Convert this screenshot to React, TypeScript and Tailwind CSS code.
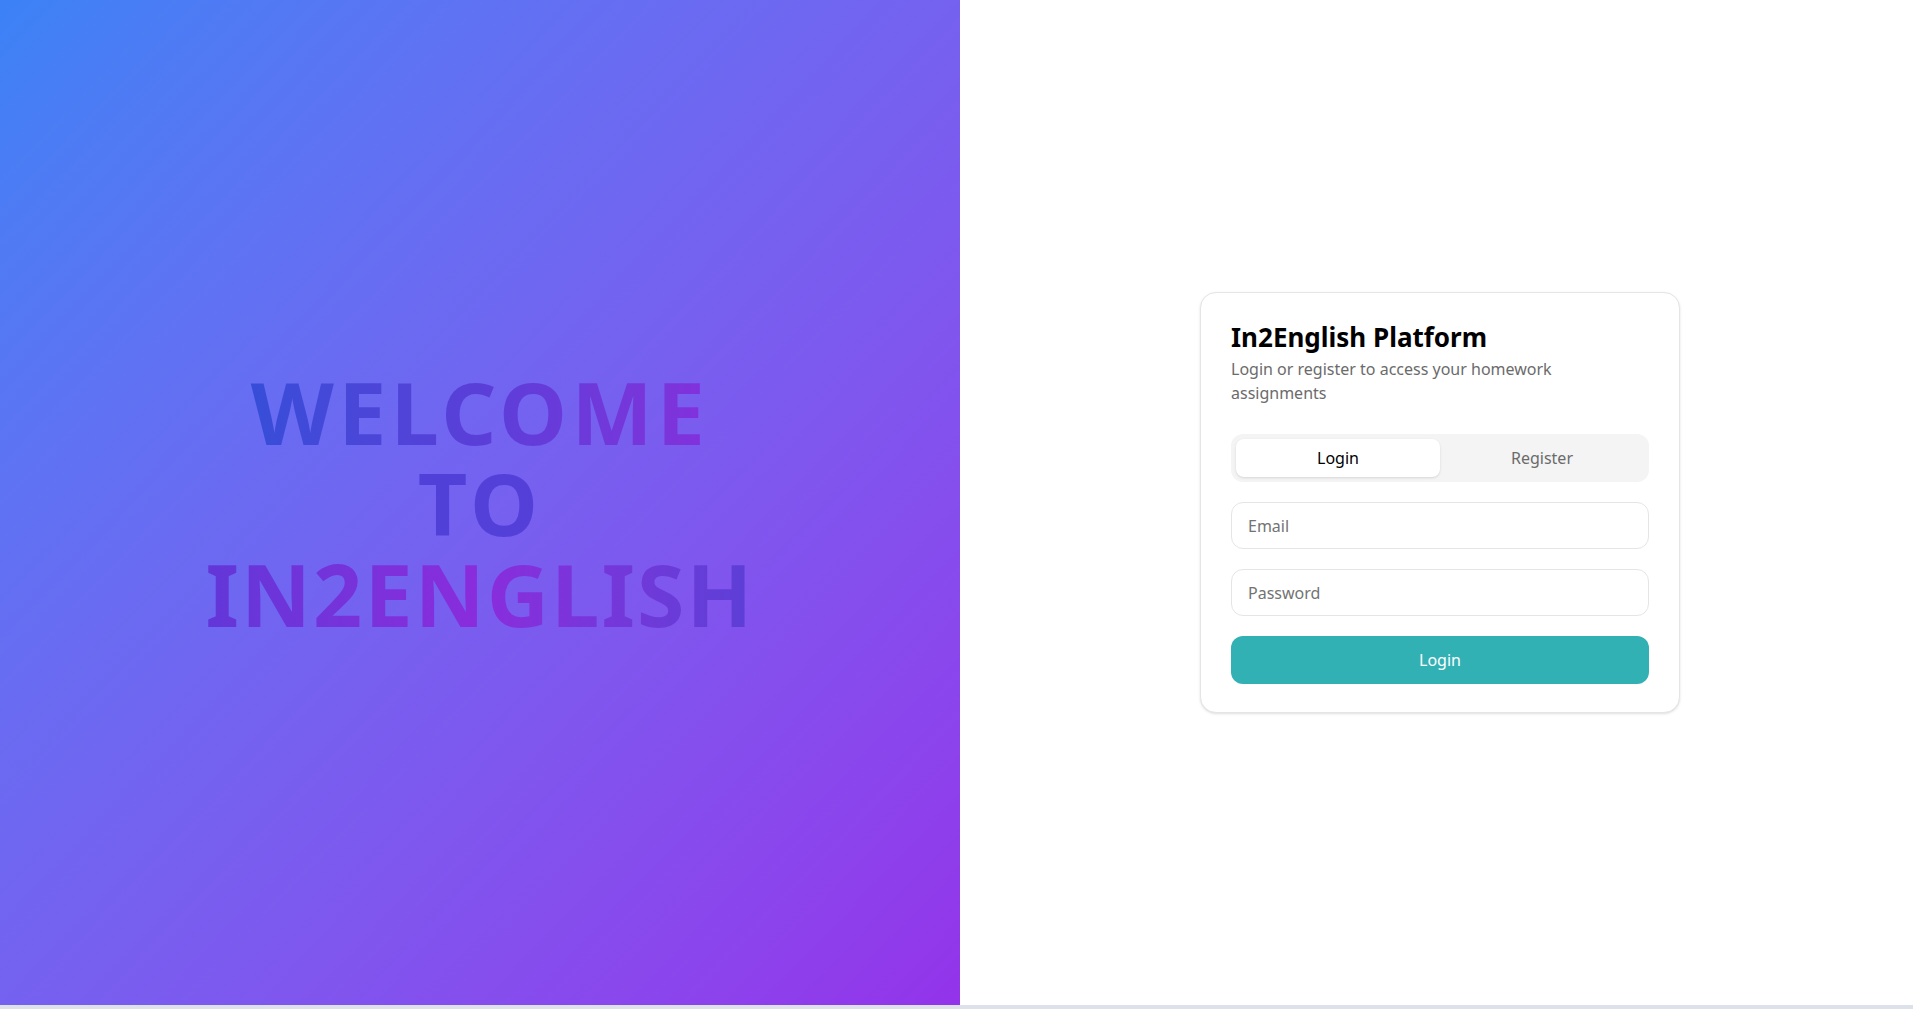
import { useState } from 'react';

export default function App() {
  const [tab, setTab] = useState<'login' | 'register'>('login');

  return (
    <div className="w-full min-h-screen bg-white font-['Noto_Sans',sans-serif]">
      <div className="flex h-[1005px]">
        {/* Left hero */}
        <div className="w-[960px] shrink-0 h-full bg-gradient-to-br from-[#3b82f6] to-[#9333ea] flex items-center justify-center">
          <h1 className="text-center font-bold text-[86px] leading-[91px]">
            <span className="block tracking-wider bg-gradient-to-r from-[#2b50d8] via-[#5a3ed8] to-[#8a2cdc] bg-clip-text text-transparent">
              WELCOME
            </span>
            <span className="block tracking-wider bg-gradient-to-r from-[#4a42d8] to-[#5a3ed8] bg-clip-text text-transparent">
              TO
            </span>
            <span className="block tracking-wide bg-gradient-to-r from-[#6236d8] via-[#8a2cdc] to-[#5b3fd6] bg-clip-text text-transparent">
              IN2ENGLISH
            </span>
          </h1>
        </div>

        {/* Right form */}
        <div className="flex-1 h-full flex items-center justify-center pl-[7px]">
          <div className="w-[480px] rounded-2xl border border-[#e5e5e5] bg-white px-[30px] pt-[26px] pb-[28px] shadow-sm">
            <h2 className="text-[26px] font-bold text-black leading-9">In2English Platform</h2>
            <p className="mt-0.5 max-w-[360px] text-base leading-6 text-[#6b6b6b]">
              Login or register to access your homework assignments
            </p>

            <div className="mt-[29px] flex rounded-xl bg-[#f4f4f4] p-[5px]">
              <button
                onClick={() => setTab('login')}
                className={`flex-1 h-[38px] rounded-lg text-base ${
                  tab === 'login' ? 'bg-white text-black shadow-sm' : 'text-[#6b6b6b]'
                }`}
              >
                Login
              </button>
              <button
                onClick={() => setTab('register')}
                className={`flex-1 h-[38px] rounded-lg text-base ${
                  tab === 'register' ? 'bg-white text-black shadow-sm' : 'text-[#6b6b6b]'
                }`}
              >
                Register
              </button>
            </div>

            <div className="mt-5 flex flex-col gap-[20px]">
              <input
                type="email"
                placeholder="Email"
                className="h-[47px] w-full rounded-xl border border-[#e5e5e5] px-4 text-base text-black placeholder:text-[#737373] outline-none"
              />
              <input
                type="password"
                placeholder="Password"
                className="h-[47px] w-full rounded-xl border border-[#e5e5e5] px-4 text-base text-black placeholder:text-[#737373] outline-none"
              />
              <button className="h-[48px] w-full rounded-xl bg-[#32b1b5] text-base text-white">
                {tab === 'login' ? 'Login' : 'Register'}
              </button>
            </div>
          </div>
        </div>
      </div>
      <div className="h-[4px] bg-[#dde1ea]" />
    </div>
  );
}
